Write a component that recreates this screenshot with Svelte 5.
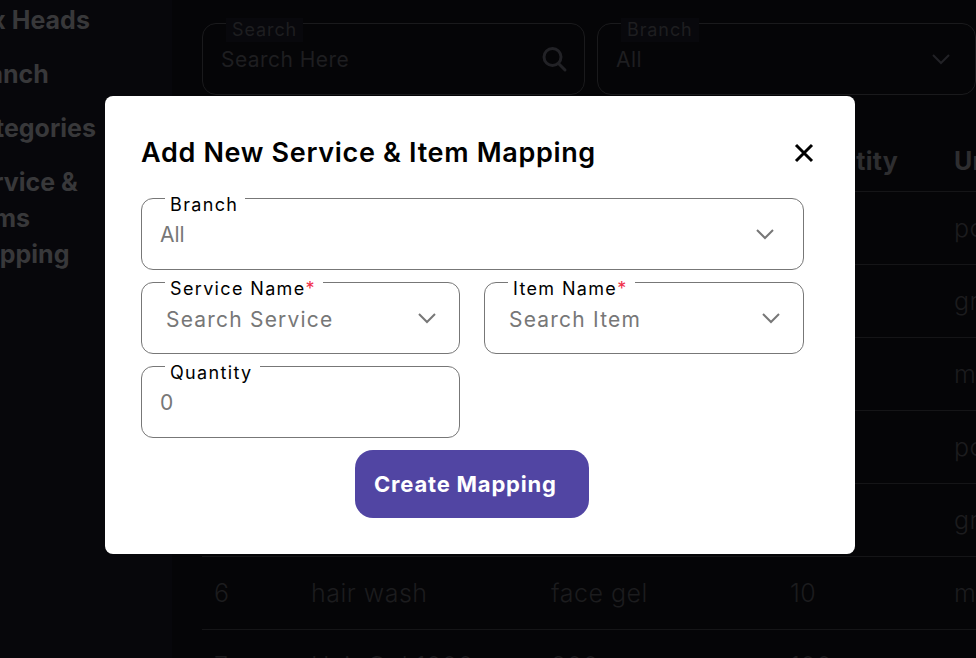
<script>
  const rows = [
    ['1', 'hair spa', 'shampoo', '20', 'pcs'],
    ['2', 'facial', 'cream', '15', 'gram'],
    ['3', 'hair color', 'serum', '50', 'ml'],
    ['4', 'manicure', 'nail kit', '1', 'pcs'],
    ['5', 'pedicure', 'scrub', '30', 'gram'],
    ['6', 'hair wash', 'face gel', '10', 'ml'],
    ['7', 'Hair Gel 1000', '200', '100', 'pcs']
  ];
</script>

<div class="page">
  <aside class="side">
    <p>Tax Heads</p>
    <p>Branch</p>
    <p>Categories</p>
    <p>Service &amp;<br />Items<br />Mapping</p>
  </aside>

  <main class="main">
    <div class="filters">
      <div class="dim-field">
        <span class="dim-label">Search</span>
        <span class="dim-value">Search Here</span>
        <svg class="dim-icon" width="28" height="28" viewBox="0 0 28 28" fill="none" stroke="#222226" stroke-width="3">
          <circle cx="12.5" cy="12" r="8.5" />
          <path d="M18.5 18.5 25 25" stroke-linecap="round" />
        </svg>
      </div>
      <div class="dim-field select">
        <span class="dim-label">Branch</span>
        <span class="dim-value">All</span>
        <svg class="dim-icon" width="20" height="12" viewBox="0 0 20 12" fill="none" stroke="#222226" stroke-width="2">
          <path d="M2 2l8 8 8-8" />
        </svg>
      </div>
    </div>

    <table class="table">
      <thead>
        <tr><th>#</th><th>Service Name</th><th>Item Name</th><th>Quantity</th><th>Unit</th></tr>
      </thead>
      <tbody>
        {#each rows as row}
          <tr>{#each row as cell}<td>{cell}</td>{/each}</tr>
        {/each}
      </tbody>
    </table>
  </main>

  <section class="modal">
    <header class="head">
      <h2>Add New Service &amp; Item Mapping</h2>
      <svg width="22" height="22" viewBox="0 0 22 22" fill="none" stroke="#000" stroke-width="3">
        <path d="M3 3l16 16M19 3 3 19" />
      </svg>
    </header>

    <div class="form">
      <div class="field wide">
        <span class="label">Branch</span>
        <span class="value tight">All</span>
        <svg class="chev" width="20" height="12" viewBox="0 0 20 12" fill="none" stroke="#777" stroke-width="2"><path d="M2 2l8 8 8-8" /></svg>
      </div>
      <div class="field">
        <span class="label">Service Name<i>*</i></span>
        <span class="value">Search Service</span>
        <svg class="chev" width="20" height="12" viewBox="0 0 20 12" fill="none" stroke="#777" stroke-width="2"><path d="M2 2l8 8 8-8" /></svg>
      </div>
      <div class="field">
        <span class="label">Item Name<i>*</i></span>
        <span class="value">Search Item</span>
        <svg class="chev" width="20" height="12" viewBox="0 0 20 12" fill="none" stroke="#777" stroke-width="2"><path d="M2 2l8 8 8-8" /></svg>
      </div>
      <div class="field">
        <span class="label">Quantity</span>
        <span class="value tight">0</span>
      </div>
    </div>

    <button class="submit">Create Mapping</button>
  </section>
</div>

<style>
  :global(body) {
    margin: 0;
    background: #050507;
  }

  .page {
    position: relative;
    display: flex;
    width: 976px;
    height: 658px;
    overflow: hidden;
    font-family: Inter, "Liberation Sans", sans-serif;
  }

  .side {
    flex: 0 0 172px;
    box-sizing: border-box;
    padding-top: 2px;
    background: #07070b;
    color: #38383a;
    font-size: 25px;
    font-weight: 700;
    line-height: 36px;
  }

  .side p {
    margin: 0 0 18px -38px;
    white-space: nowrap;
  }

  .main {
    flex: none;
    width: 804px;
    box-sizing: border-box;
    padding: 23px 0 0 30px;
  }

  .filters {
    display: grid;
    grid-template-columns: 383px 379px;
    gap: 12px;
  }

  .dim-field {
    position: relative;
    display: flex;
    align-items: center;
    justify-content: space-between;
    height: 72px;
    box-sizing: border-box;
    padding: 0 16px 0 18px;
    border: 1px solid #1a1a1c;
    border-radius: 14px;
    color: #1e1e20;
    font-size: 21px;
    letter-spacing: 0.45px;
  }

  .select {
    padding-right: 24px;
  }

  .dim-label {
    position: absolute;
    top: -6px;
    left: 23px;
    padding: 0 6px;
    background: #08080c;
    font-size: 18px;
    line-height: 24px;
    letter-spacing: 0.9px;
  }

  .table {
    width: 900px;
    margin-top: 32px;
    border-collapse: collapse;
    table-layout: fixed;
    white-space: nowrap;
  }

  th, td {
    padding: 0 0 0 12px;
    text-align: left;
    border-bottom: 1px solid #151517;
  }

  th:nth-child(1), td:nth-child(1) { width: 85px; }
  th:nth-child(2), td:nth-child(2) { width: 228px; }
  th:nth-child(3), td:nth-child(3) { width: 227px; }
  th:nth-child(4), td:nth-child(4) { width: 152px; }

  th {
    height: 60px;
    padding-top: 4px;
    color: #2e2e30;
    font-size: 25px;
    font-weight: 700;
    letter-spacing: 0.3px;
  }

  td {
    height: 72px;
    color: #1c1c1e;
    font-size: 25px;
    font-weight: 300;
    letter-spacing: 0.5px;
  }

  .modal {
    position: absolute;
    top: 96px;
    left: 105px;
    width: 750px;
    height: 458px;
    box-sizing: border-box;
    padding: 37px 40px 36px 36px;
    border-radius: 8px;
    background: #fff;
    display: flex;
    flex-direction: column;
  }

  .head {
    display: flex;
    align-items: center;
    justify-content: space-between;
    height: 40px;
    margin-bottom: 25px;
  }

  h2 {
    margin: 0;
    color: #000;
    font-size: 27px;
    font-weight: 600;
    line-height: 40px;
    letter-spacing: 0.67px;
  }

  .form {
    display: grid;
    grid-template-columns: 319px 320px;
    gap: 12px 24px;
    width: 663px;
  }

  .field {
    position: relative;
    display: flex;
    align-items: center;
    justify-content: space-between;
    height: 72px;
    box-sizing: border-box;
    padding: 0 22px 0 24px;
    border: 1px solid #777;
    border-radius: 12px;
  }

  .wide {
    grid-column: 1 / -1;
    padding-right: 28px;
  }

  .label {
    position: absolute;
    top: -6px;
    left: 23px;
    padding: 0 7px 0 5px;
    background: #fff;
    color: #000;
    font-size: 18px;
    line-height: 23px;
    letter-spacing: 1.35px;
  }

  .label i {
    color: #f0304a;
    font-style: normal;
  }

  .value {
    padding-top: 2px;
    color: #777;
    font-size: 21px;
    letter-spacing: 1.2px;
  }

  .tight {
    padding-top: 0;
    margin-left: -6px;
    letter-spacing: 0;
  }

  .chev {
    margin-top: -1px;
  }

  .submit {
    align-self: flex-start;
    width: 234px;
    height: 68px;
    margin: 12px 0 0 214px;
    padding: 0 0 0 19px;
    border: 0;
    border-radius: 18px;
    background: #5145a3;
    color: #fff;
    font-family: inherit;
    font-size: 22px;
    font-weight: 700;
    letter-spacing: 0.8px;
    text-align: left;
    white-space: nowrap;
  }
</style>
